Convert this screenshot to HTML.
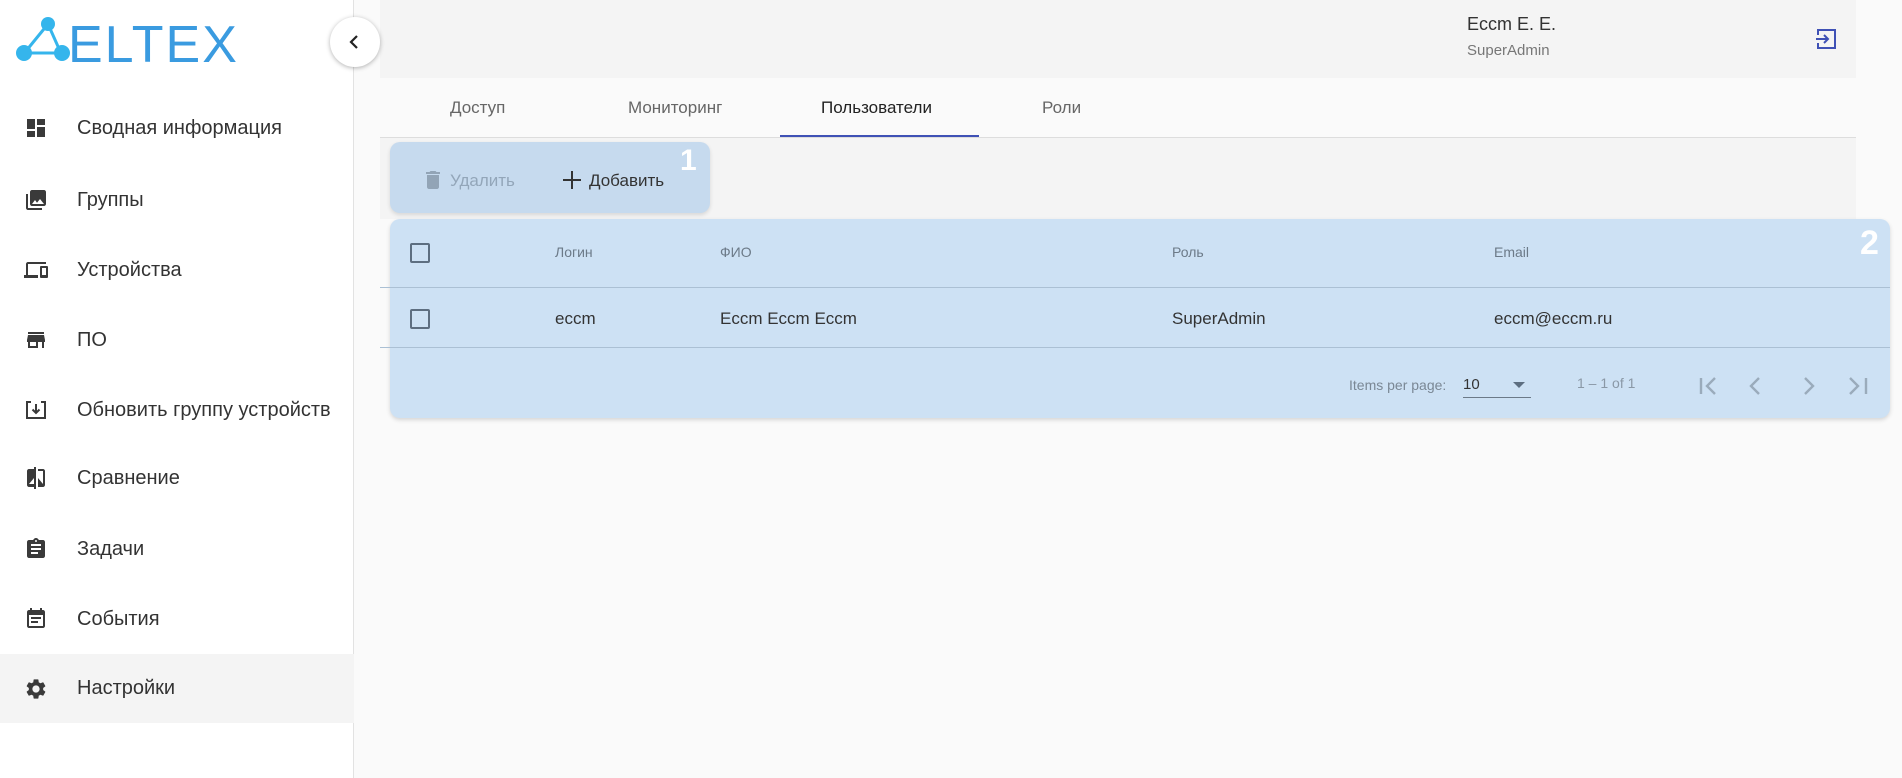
<!DOCTYPE html>
<html><head><meta charset="utf-8"><style>
*{box-sizing:border-box;margin:0;padding:0}
body{width:1902px;height:778px;overflow:hidden;background:#fafafa;font-family:"Liberation Sans",Roboto,sans-serif;position:relative;color:#333}
.abs{position:absolute}
#side{left:0;top:0;width:354px;height:778px;background:#fff;border-right:1px solid #e2e2e2}
.item{position:absolute;left:0;width:354px;height:70px;display:flex;align-items:center}
.item svg{position:absolute;left:24px;width:24px;height:24px}
.item span{position:absolute;left:77px;font-size:20px;color:#333}
.t{position:absolute;white-space:nowrap}
</style></head><body>
<div id="side" class="abs">
<svg class="abs" style="left:14px;top:16px" width="225" height="50" viewBox="0 0 225 50">
<g fill="#35b5ec"><circle cx="10" cy="37" r="8"/><circle cx="34" cy="8" r="7"/><circle cx="48" cy="37" r="8"/></g>
<g stroke="#35b5ec" stroke-width="3"><line x1="10" y1="37" x2="48" y2="37"/><line x1="34" y1="8" x2="12" y2="35"/><line x1="34" y1="8" x2="46" y2="35"/></g>
<text x="54" y="46" font-family="Liberation Sans,sans-serif" font-size="52" fill="#3a9be0" letter-spacing="2">ELTEX</text>
</svg>
<div class="item" style="top:93px;"><svg viewBox="0 0 24 24"><path fill="#3a3a3a" d="M3 13h8V3H3v10zm0 8h8v-6H3v6zm10 0h8V11h-8v10zm0-18v6h8V3h-8z"/></svg><span>Сводная информация</span></div>
<div class="item" style="top:165px;"><svg viewBox="0 0 24 24"><path fill="#3a3a3a" d="M22 16V4c0-1.1-.9-2-2-2H8c-1.1 0-2 .9-2 2v12c0 1.1.9 2 2 2h12c1.1 0 2-.9 2-2zm-11-4l2 2.7 3-3.7 4 5H8l3-4zM2 6v14c0 1.1.9 2 2 2h14v-2H4V6H2z"/></svg><span>Группы</span></div>
<div class="item" style="top:235px;"><svg viewBox="0 0 24 24"><path fill="#3a3a3a" d="M4 6h18V4H4c-1.1 0-2 .9-2 2v11H0v3h14v-3H4V6zm19 2h-6c-.55 0-1 .45-1 1v10c0 .55.45 1 1 1h6c.55 0 1-.45 1-1V9c0-.55-.45-1-1-1zm-1 9h-4v-7h4v7z"/></svg><span>Устройства</span></div>
<div class="item" style="top:305px;"><svg viewBox="0 0 24 24"><path fill="#3a3a3a" d="M20 4H4v2h16V4zm1 10v-2l-1-5H4l-1 5v2h1v6h10v-6h4v6h2v-6h1zm-9 4H6v-4h6v4z"/></svg><span>ПО</span></div>
<div class="item" style="top:375px;"><svg viewBox="0 0 24 24"><path fill="none" stroke="#3a3a3a" stroke-width="2" d="M7 4H3v16h18V4h-4M12 6v9M8.5 11.5L12 15l3.5-3.5"/></svg><span>Обновить группу устройств</span></div>
<div class="item" style="top:443px;"><svg viewBox="0 0 24 24"><path fill="#3a3a3a" d="M10 3H5c-1.1 0-2 .9-2 2v14c0 1.1.9 2 2 2h5v2h2V1h-2v2zm0 15H5l5-6v6zm9-15h-5v2h5v13l-5-6v9h5c1.1 0 2-.9 2-2V5c0-1.1-.9-2-2-2z"/></svg><span>Сравнение</span></div>
<div class="item" style="top:514px;"><svg viewBox="0 0 24 24"><path fill="#3a3a3a" d="M19 3h-4.18C14.4 1.84 13.3 1 12 1s-2.4.84-2.82 2H5c-1.1 0-2 .9-2 2v14c0 1.1.9 2 2 2h14c1.1 0 2-.9 2-2V5c0-1.1-.9-2-2-2zm-7 0c.55 0 1 .45 1 1s-.45 1-1 1-1-.45-1-1 .45-1 1-1zm2 14H7v-2h7v2zm3-4H7v-2h10v2zm0-4H7V7h10v2z"/></svg><span>Задачи</span></div>
<div class="item" style="top:584px;"><svg viewBox="0 0 24 24"><path fill="#3a3a3a" d="M19 3h-1V1h-2v2H8V1H6v2H5c-1.1 0-2 .9-2 2v14c0 1.1.9 2 2 2h14c1.1 0 2-.9 2-2V5c0-1.1-.9-2-2-2zm0 16H5V8h14v11zM7 10h10v2H7zm0 4h7v2H7z"/></svg><span>События</span></div>
<div class="item" style="top:654px;height:69px;background:#f4f4f4"><svg viewBox="0 0 24 24"><path fill="#3a3a3a" d="M19.14 12.94c.04-.3.06-.61.06-.94 0-.32-.02-.64-.07-.94l2.030-1.58a.49.49 0 00.12-.61l-1.92-3.32a.488.488 0 00-.59-.22l-2.39.96c-.5-.38-1.030-.7-1.62-.94l-.36-2.54a.484.484 0 00-.48-.41h-3.84c-.24 0-.43.17-.47.41l-.36 2.54c-.59.24-1.13.57-1.62.94l-2.39-.96c-.22-.08-.47 0-.59.22L2.74 8.87c-.12.21-.08.47.12.61l2.03 1.58c-.05.3-.09.63-.09.94s.02.64.07.94l-2.03 1.58a.49.49 0 00-.12.61l1.92 3.32c.12.22.37.29.59.22l2.39-.96c.5.38 1.03.7 1.62.94l.36 2.54c.05.24.24.41.48.41h3.84c.24 0 .44-.17.47-.41l.36-2.54c.59-.24 1.13-.56 1.62-.94l2.39.96c.22.08.47 0 .59-.22l1.92-3.32c.12-.22.07-.47-.12-.61l-2.01-1.58zM12 15.6c-1.98 0-3.6-1.62-3.6-3.6s1.62-3.6 3.6-3.6 3.6 1.62 3.6 3.6-1.62 3.6-3.6 3.6z"/></svg><span>Настройки</span></div>
</div>
<!-- header -->
<div class="abs" style="left:380px;top:0;width:1476px;height:78px;background:#f4f4f4"></div>
<div class="abs" style="left:330px;top:17px;width:50px;height:50px;border-radius:50%;background:#fff;box-shadow:0 1px 5px rgba(0,0,0,.3)"></div>
<svg class="abs" style="left:346px;top:33px" width="18" height="18" viewBox="0 0 18 18"><path d="M11 3L5 9l6 6" fill="none" stroke="#222" stroke-width="2.2"/></svg>
<div class="t" style="left:1467px;top:14px;font-size:18px;color:#333">Eccm E. E.</div>
<div class="t" style="left:1467px;top:42px;font-size:15px;color:#777">SuperAdmin</div>
<svg class="abs" style="left:1814px;top:27px" width="24" height="24" viewBox="0 0 24 24"><path fill="none" stroke="#3f51b5" stroke-width="2" d="M4 8V3h17v18H4v-5M2 12h12M10 8l4 4-4 4"/></svg>
<!-- tabs -->
<div class="t" style="left:450px;top:98px;font-size:17px;color:#666">Доступ</div>
<div class="t" style="left:628px;top:98px;font-size:17px;color:#666">Мониторинг</div>
<div class="t" style="left:821px;top:98px;font-size:17px;color:#222">Пользователи</div>
<div class="t" style="left:1042px;top:98px;font-size:17px;color:#666">Роли</div>
<div class="abs" style="left:380px;top:137px;width:1476px;height:1px;background:#ddd"></div>
<div class="abs" style="left:780px;top:135px;width:199px;height:2px;background:#3f51b5"></div>
<div class="abs" style="left:380px;top:138px;width:1476px;height:81px;background:#f4f4f4"></div>
<!-- toolbar -->
<div class="abs" style="left:390px;top:142px;width:320px;height:71px;background:#c6daee;border-radius:10px;box-shadow:0 2px 4px rgba(0,0,0,.12)"></div>
<svg class="abs" style="left:421px;top:168px" width="24" height="24" viewBox="0 0 24 24"><path fill="#92a4b6" d="M6 19c0 1.1.9 2 2 2h8c1.1 0 2-.9 2-2V7H6v12zM19 4h-3.5l-1-1h-5l-1 1H5v2h14V4z"/></svg>
<div class="t" style="left:450px;top:171px;font-size:17px;color:#93a6b9">Удалить</div>
<svg class="abs" style="left:561px;top:169px" width="22" height="22" viewBox="0 0 22 22"><path d="M11 2v18M2 11h18" stroke="#333" stroke-width="2"/></svg>
<div class="t" style="left:589px;top:171px;font-size:17px;color:#333">Добавить</div>
<div class="t" style="left:680px;top:144px;font-size:30px;font-weight:bold;color:#fff">1</div>
<!-- table -->
<div class="abs" style="left:390px;top:219px;width:1500px;height:199px;background:#cde1f4;border-radius:10px;box-shadow:0 2px 4px rgba(0,0,0,.15)"></div>
<div class="abs" style="left:380px;top:287px;width:1510px;height:1px;background:#abc0d4"></div>
<div class="abs" style="left:380px;top:347px;width:1510px;height:1px;background:#abc0d4"></div>
<div class="abs" style="left:410px;top:243px;width:20px;height:20px;border:2px solid #5d6e80;border-radius:2px"></div>
<div class="abs" style="left:410px;top:309px;width:20px;height:20px;border:2px solid #5d6e80;border-radius:2px"></div>
<div class="t" style="left:555px;top:244px;font-size:14px;color:#6c7a88">Логин</div>
<div class="t" style="left:720px;top:244px;font-size:14px;color:#6c7a88">ФИО</div>
<div class="t" style="left:1172px;top:244px;font-size:14px;color:#6c7a88">Роль</div>
<div class="t" style="left:1494px;top:244px;font-size:14px;color:#6c7a88">Email</div>
<div class="t" style="left:1860px;top:224px;font-size:34px;font-weight:bold;color:#fff">2</div>
<div class="t" style="left:555px;top:309px;font-size:17px;color:#333">eccm</div>
<div class="t" style="left:720px;top:309px;font-size:17px;color:#333">Eccm Eccm Eccm</div>
<div class="t" style="left:1172px;top:309px;font-size:17px;color:#333">SuperAdmin</div>
<div class="t" style="left:1494px;top:309px;font-size:17px;color:#333">eccm@eccm.ru</div>
<div class="t" style="left:1349px;top:377px;font-size:14px;color:#7a8794">Items per page:</div>
<div class="t" style="left:1463px;top:376px;font-size:15px;color:#333">10</div>
<div class="abs" style="left:1463px;top:397px;width:68px;height:1px;background:#6c7a88"></div>
<svg class="abs" style="left:1513px;top:381px" width="12" height="8"><path d="M0 1h12L6 7z" fill="#5d6e80"/></svg>
<div class="t" style="left:1577px;top:375px;font-size:14px;color:#8a98a6">1 – 1 of 1</div>
<svg class="abs" style="left:1695px;top:372px" width="180" height="28" viewBox="0 0 180 28" fill="none" stroke="#9aabbb" stroke-width="2.4"><path d="M6 6v16M20 6l-8 8 8 8M64 6l-8 8 8 8M110 6l8 8-8 8M155 6l8 8-8 8M171 6v16"/></svg>
</body></html>
